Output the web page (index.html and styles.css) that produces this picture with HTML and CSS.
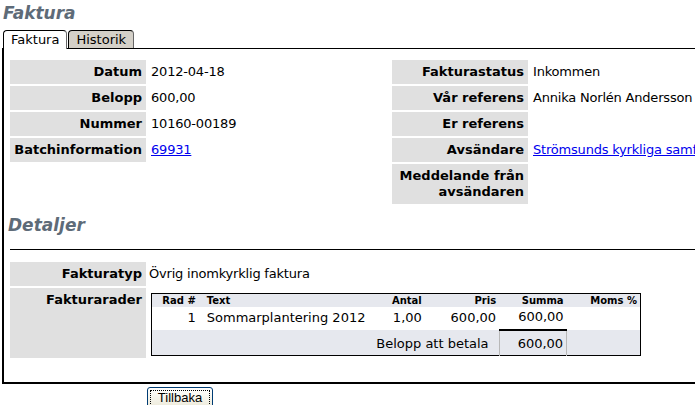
FILE: index.html
```html
<!DOCTYPE html>
<html>
<head>
	<title>Faktura</title>
	<meta charset="utf-8">
	<link rel="stylesheet" href="styles.css">
</head>
<body>
<h1 class="page-title">Faktura</h1>
<div class="tabs">
	<span class="tab active">Faktura</span>
	<span class="tab">Historik</span>
</div>
<div class="panel">
	<div class="info">
		<dl class="fields left">
			<dt>Datum</dt><dd>2012-04-18</dd>
			<dt>Belopp</dt><dd>600,00</dd>
			<dt>Nummer</dt><dd>10160-00189</dd>
			<dt>Batchinformation</dt><dd><a href="#">69931</a></dd>
		</dl>
		<dl class="fields">
			<dt>Fakturastatus</dt><dd>Inkommen</dd>
			<dt>Vår referens</dt><dd>Annika Norlén Andersson</dd>
			<dt>Er referens</dt><dd></dd>
			<dt>Avsändare</dt><dd><a href="#">Strömsunds kyrkliga samfällighet</a></dd>
			<dt>Meddelande från avsändaren</dt><dd></dd>
		</dl>
	</div>
	<h2 class="section-title">Detaljer</h2>
	<hr class="rule">
	<dl class="fields details">
		<dt>Fakturatyp</dt><dd>Övrig inomkyrklig faktura</dd>
		<dt class="tall">Fakturarader</dt>
		<dd>
			<table class="rows">
				<tr>
					<th class="c-nr">Rad #</th>
					<th class="c-text">Text</th>
					<th class="c-antal">Antal</th>
					<th class="c-pris">Pris</th>
					<th class="c-summa">Summa</th>
					<th class="c-moms">Moms %</th>
				</tr>
				<tr class="line">
					<td class="c-nr">1</td>
					<td class="c-text">Sommarplantering 2012</td>
					<td class="c-antal">1,00</td>
					<td class="c-pris">600,00</td>
					<td class="c-summa">600,00</td>
					<td class="c-moms"></td>
				</tr>
				<tr class="total">
					<td colspan="4" class="total-label">Belopp att betala</td>
					<td class="total-sum">600,00</td>
					<td></td>
				</tr>
			</table>
		</dd>
	</dl>
</div>
<button class="back">Tillbaka</button>
</body>
</html>
```

FILE: styles.css
```css
html, body {
	overflow: hidden;
}
body {
	margin: 0;
	padding: 0;
	font-family: "DejaVu Sans", Verdana, sans-serif;
	font-size: 13px;
	color: #000;
	background: #fff;
}
.page-title, .section-title {
	margin: 0;
	font-size: 17px;
	line-height: 20px;
	font-weight: bold;
	font-style: italic;
	color: #5e6b78;
}
.page-title {
	padding: 3px 0 0 3px;
}
.tabs {
	display: flex;
	gap: 1px;
	margin: 7px 0 0 3px;
}
.tab {
	border: 1px solid #000;
	border-bottom: none;
	border-right-color: #666;
	border-radius: 4px 4px 0 0;
	padding: 1px 7px 0;
	line-height: 16px;
	background: #d4d0c8;
}
.tab.active {
	background: #fff;
	position: relative;
	margin-bottom: -1px;
	z-index: 1;
}
.panel {
	width: 900px;
	margin-left: 2px;
	border: 2px solid #000;
	border-top-width: 1px;
	padding: 11px 0 24px 6px;
}
.info {
	display: flex;
}
.fields {
	display: grid;
	grid-template-columns: 136px auto;
	grid-auto-rows: minmax(24px, auto);
	row-gap: 2px;
	margin: 0;
	align-content: start;
}
.fields.left {
	width: 382px;
}
.fields dt {
	background: #e0e0e0;
	font-weight: bold;
	text-align: right;
	padding: 4px 4px 4px 0;
	line-height: 16px;
	align-self: stretch;
}
.fields dd {
	margin: 0;
	padding: 4px 0 4px 5px;
	line-height: 16px;
	white-space: nowrap;
	letter-spacing: -0.2px;
}
.fields a {
	color: #0000ee;
}
.section-title {
	margin: 11px 0 0 -2px;
}
.rule {
	margin: 14px 0 0;
	border: none;
	border-top: 1px solid #000;
}
.details {
	margin-top: 12px;
}
.details dd {
	padding-left: 3px;
}
.details dd:last-child {
	padding: 5px 0 2px 5px;
	letter-spacing: 0;
}
.rows {
	border-collapse: collapse;
	border: 1px solid #000;
	width: 490px;
	font-size: 13px;
}
.rows th {
	font-size: 10px;
	font-weight: bold;
	line-height: 12px;
	padding: 1px 3px 0;
	background: #e6e8ee;
	text-align: right;
}
.rows td {
	padding: 2px 3px 4px;
	line-height: 16px;
	text-align: right;
}
.rows .c-nr {
	width: 41px;
	padding-right: 4px;
}
.rows .c-text {
	width: 156px;
	text-align: left;
	padding-left: 7px;
}
.rows .c-antal {
	width: 51px;
}
.rows .c-pris {
	width: 69px;
}
.rows .c-summa {
	width: 62px;
}
.rows .c-moms {
	width: 68px;
}
.rows .total td {
	background: #e6e8ee;
	padding: 5px 3px 3px;
}
.rows .total .total-label {
	padding-right: 10px;
}
.rows .total .total-sum {
	border-top: 2px solid #000;
	border-left: 1px solid #b8b8b8;
	border-right: 1px solid #b8b8b8;
}
.back {
	margin: 3px 0 0 147px;
	font-family: "Liberation Sans", Arial, sans-serif;
	font-size: 13px;
	line-height: 15px;
	padding: 2px 8px 3px;
	width: 66px;
	border: 1px solid #003c74;
	border-radius: 3px;
	background: linear-gradient(#ffffff, #ece9d8);
	outline: 1px dotted #000;
	outline-offset: -4px;
}
```
